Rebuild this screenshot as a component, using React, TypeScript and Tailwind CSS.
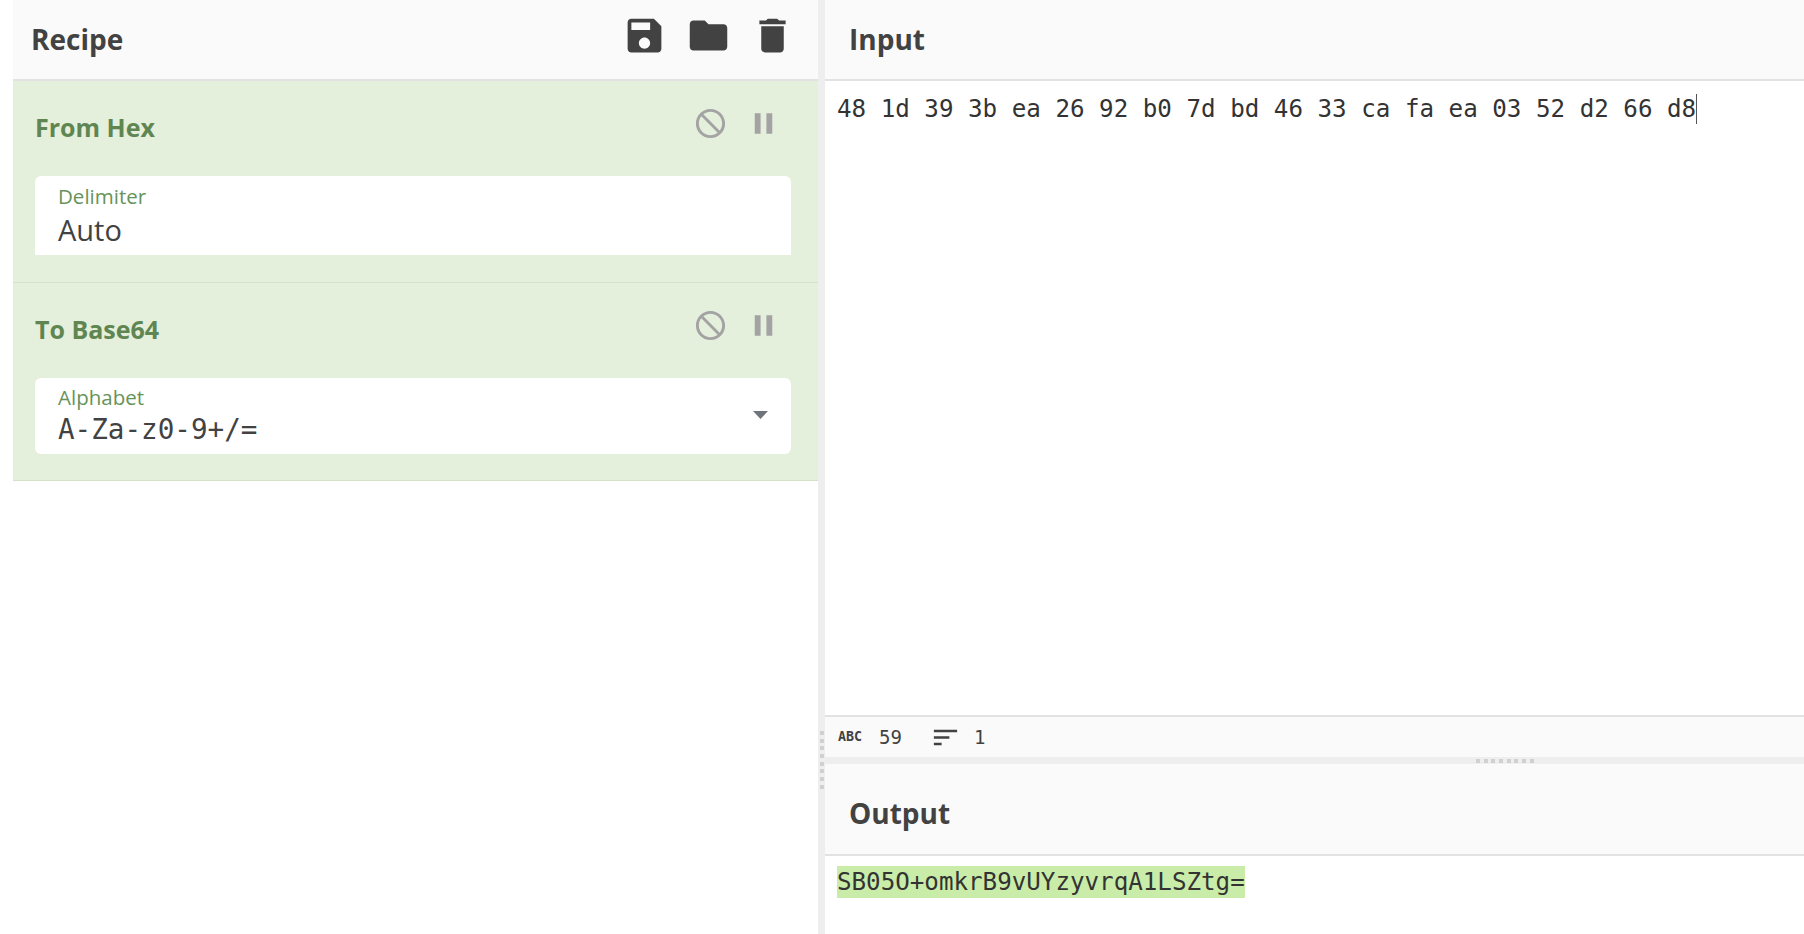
import React from 'react';

const SANS = "font-['Open_Sans',sans-serif]";

const Icon: React.FC<{ d: string; className: string }> = ({ d, className }) => (
  <svg viewBox="0 0 24 24" fill="currentColor" className={className}>
    <path d={d} />
  </svg>
);

const ICONS = {
  save: 'M17 3H5c-1.11 0-2 .9-2 2v14c0 1.1.89 2 2 2h14c1.1 0 2-.9 2-2V7l-4-4zm-5 16c-1.66 0-3-1.34-3-3s1.34-3 3-3 3 1.34 3 3-1.34 3-3 3zm3-10H5V5h10v4z',
  folder: 'M10 4H4c-1.1 0-1.99.9-1.99 2L2 18c0 1.1.9 2 2 2h16c1.1 0 2-.9 2-2V8c0-1.1-.9-2-2-2h-8l-2-2z',
  trash: 'M6 19c0 1.1.9 2 2 2h8c1.1 0 2-.9 2-2V7H6v12zM19 4h-3.5l-1-1h-5l-1 1H5v2h14V4z',
  disable: 'M12 2C6.48 2 2 6.48 2 12s4.48 10 10 10 10-4.48 10-10S17.52 2 12 2zm0 18c-4.42 0-8-3.58-8-8 0-1.85.63-3.55 1.69-4.9L16.9 18.31C15.55 19.37 13.85 20 12 20zm6.31-3.1L7.1 5.69C8.45 4.63 10.15 4 12 4c4.42 0 8 3.58 8 8 0 1.85-.63 3.55-1.69 4.9z',
  pause: 'M6 19h4V5H6v14zm8-14v14h4V5h-4z',
  sort: 'M3 18h6v-2H3v2zM3 6v2h18V6H3zm0 7h12v-2H3v2z',
};

const PanelTitle: React.FC<{ title: string; height: string; pad: string; children?: React.ReactNode }> = ({ title, height, pad, children }) => (
  <div className={`${height} ${pad} flex items-center justify-between shrink-0 bg-[#fafafa] border-b-2 border-[#e2e2e2]`}>
    <span className={`${SANS} text-[28px] font-bold text-[#424242]`}>{title}</span>
    {children}
  </div>
);

const Operation: React.FC<{ name: string; height: string; children: React.ReactNode }> = ({ name, height, children }) => (
  <div className={`${height} flex flex-col bg-[#e4efdc] border-b border-[#d4e3c8] pl-[22px] pr-[27px]`}>
    <div className="h-[95px] flex items-start justify-between shrink-0 pt-[25px]">
      <span className={`${SANS} text-[25px] font-bold text-[#5f8651] mt-[3px]`}>{name}</span>
      <div className="flex items-center gap-[18px] pr-[10px] text-[#a3a3a3]">
        <Icon d={ICONS.disable} className="w-[35px] h-[35px]" />
        <Icon d={ICONS.pause} className="w-[35px] h-[35px]" />
      </div>
    </div>
    {children}
  </div>
);

const DotsV = () => (
  <div className="flex flex-col gap-[3.7px] mt-[731px] ml-[2px]">
    {Array.from({ length: 8 }).map((_, i) => (
      <div key={i} className="w-[4px] h-[4px] bg-[#d0d0d0]" />
    ))}
  </div>
);

const DotsH = () => (
  <div className="flex gap-[3.7px] ml-[651px]">
    {Array.from({ length: 8 }).map((_, i) => (
      <div key={i} className="w-[4px] h-[4px] bg-[#d0d0d0]" />
    ))}
  </div>
);

export default function App() {
  return (
    <div className="flex w-[1804px] h-[934px] overflow-hidden bg-white pl-[13px] text-[#424242]">
      {/* Recipe */}
      <div className="w-[805px] flex flex-col shrink-0">
        <PanelTitle title="Recipe" height="h-[81px]" pad="pl-[18px] pr-[23px] pb-[2px]">
          <div className="flex items-center gap-[19px] -mt-[7px]">
            <Icon d={ICONS.save} className="w-[45px] h-[45px]" />
            <Icon d={ICONS.folder} className="w-[45px] h-[45px]" />
            <Icon d={ICONS.trash} className="w-[45px] h-[45px]" />
          </div>
        </PanelTitle>

        <Operation name="From Hex" height="h-[202px]">
          <div className="h-[79px] bg-white rounded-t-[6px] pl-[23px] pt-[7px]">
            <div className={`${SANS} text-[20.5px] leading-[26px] text-[#66935a]`}>Delimiter</div>
            <div className={`${SANS} text-[29px] leading-[38px] text-[#424242] mt-[2px]`}>Auto</div>
          </div>
        </Operation>

        <Operation name="To Base64" height="h-[198px]">
          <div className="h-[76px] bg-white rounded-[6px] pl-[23px] pr-[23px] pt-[6px] flex items-start justify-between">
            <div>
              <div className={`${SANS} text-[20.5px] leading-[26px] text-[#66935a]`}>Alphabet</div>
              <div className="font-['DejaVu_Sans_Mono',monospace] text-[27.6px] leading-[36px] text-[#424242] mt-[2px]">A-Za-z0-9+/=</div>
            </div>
            <svg viewBox="0 0 15 8" className="w-[15px] h-[8px] text-[#6f747a] mt-[27px]" fill="currentColor">
              <polygon points="0,0 15,0 7.5,8" />
            </svg>
          </div>
        </Operation>
      </div>

      {/* Splitter */}
      <div className="w-[7px] shrink-0 bg-[#eeeeee]">
        <DotsV />
      </div>

      {/* Input and output */}
      <div className="flex-1 flex flex-col min-w-0">
        <PanelTitle title="Input" height="h-[81px]" pad="px-[24px] pb-[2px]" />
        <div className="flex-1 px-[12px] pt-[12px]">
          <div className="font-['DejaVu_Sans_Mono',monospace] text-[24.2px] leading-[32px] text-[#333] flex items-center">
            <span className="whitespace-pre">48 1d 39 3b ea 26 92 b0 7d bd 46 33 ca fa ea 03 52 d2 66 d8</span>
            <span className="w-px h-[30px] bg-[#555]" />
          </div>
        </div>

        <div className="h-[42px] shrink-0 bg-[#fafafa] border-t-2 border-[#e2e2e2] flex items-center pl-[13px] font-['DejaVu_Sans_Mono',monospace] text-[#424242]">
          <span className="text-[13.3px] font-bold leading-none w-[41px]">ABC</span>
          <span className="text-[19px] leading-none w-[51px]">59</span>
          <Icon d={ICONS.sort} className="w-[31px] h-[31px] mr-[13px]" />
          <span className="text-[19px] leading-none">1</span>
        </div>

        <div className="h-[7px] shrink-0 bg-[#eeeeee] flex items-center">
          <DotsH />
        </div>

        <PanelTitle title="Output" height="h-[92px]" pad="px-[24px] pt-[8px]" />
        <div className="h-[78px] shrink-0 px-[12px] pt-[10px]">
          <span className="inline-block bg-[#c9eda8] font-['DejaVu_Sans_Mono',monospace] text-[24.2px] leading-[32px] text-[#333]">SB05O+omkrB9vUYzyvrqA1LSZtg=</span>
        </div>
      </div>
    </div>
  );
}
